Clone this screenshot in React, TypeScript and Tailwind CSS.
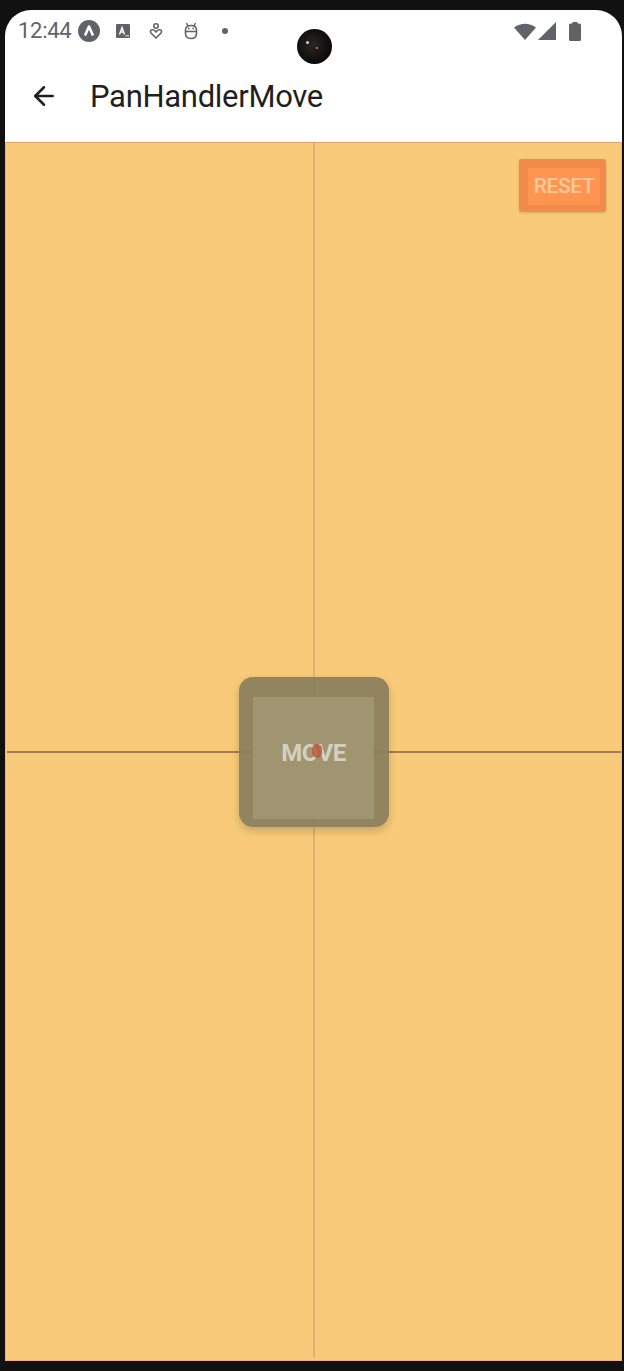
import React from 'react';
import { ArrowLeft } from 'lucide-react';

function StatusBar() {
  return (
    <div className="relative h-[50px] flex items-center px-[13px] pb-[8px] text-[#5f6368]">
      <span className="text-[22px] leading-none tracking-[-0.3px] font-['Roboto',sans-serif]">12:44</span>
      <div className="flex items-center ml-[7px]">
        <svg width="22" height="22" viewBox="0 0 22 22">
          <circle cx="11" cy="11" r="11" fill="#5f6368" />
          <path d="M7 15.5 L11 6.5 L15 15.5" stroke="#fff" strokeWidth="2.6" fill="none" strokeLinejoin="round" />
        </svg>
        <svg width="14" height="14" viewBox="0 0 14 14" className="ml-[16px]">
          <rect width="14" height="14" rx="1" fill="#5f6368" />
          <path d="M3.5 10.5 L6 3.5 L8.5 10.5 M4.4 8 H7.6" stroke="#fff" strokeWidth="1.4" fill="none" />
          <rect x="9.5" y="11" width="3.5" height="1.5" fill="#fff" opacity="0.6" />
        </svg>
        <svg width="14" height="16" viewBox="0 0 14 16" className="ml-[19px]">
          <circle cx="7" cy="3" r="2.2" stroke="#5f6368" strokeWidth="1.6" fill="none" />
          <path d="M7 15 L2 10 Q0.5 7.5 3 6.8 Q5.5 6.5 7 9 Q8.5 6.5 11 6.8 Q13.5 7.5 12 10 Z" stroke="#5f6368" strokeWidth="1.6" fill="none" strokeLinejoin="round" />
        </svg>
        <svg width="14" height="18" viewBox="0 0 14 18" className="ml-[21px]">
          <path d="M2.5 1 L4 4 M11.5 1 L10 4" stroke="#5f6368" strokeWidth="1.5" />
          <path d="M1.5 8 Q1.5 3.5 7 3.5 Q12.5 3.5 12.5 8 V11.5 Q12.5 16.5 7 16.5 Q1.5 16.5 1.5 11.5 Z" stroke="#5f6368" strokeWidth="1.6" fill="none" />
          <path d="M1.5 9.5 H12.5" stroke="#5f6368" strokeWidth="1.5" />
          <circle cx="4.8" cy="6.5" r="0.9" fill="#5f6368" />
          <circle cx="9.2" cy="6.5" r="0.9" fill="#5f6368" />
        </svg>
        <span className="ml-[24px] w-[6px] h-[6px] rounded-full bg-[#5f6368]" />
      </div>
      <div className="ml-auto flex items-center gap-[2px] mr-[28px]">
        <svg width="22" height="17" viewBox="0 0 22 17">
          <path d="M0 4.5 Q11 -3 22 4.5 L11 17 Z" fill="#5f6368" />
        </svg>
        <svg width="18" height="18" viewBox="0 0 18 18">
          <path d="M18 0 V18 H0 Z" fill="#5f6368" />
        </svg>
        <svg width="12" height="19" viewBox="0 0 12 19" className="ml-[11px]">
          <rect x="3.5" y="0" width="5" height="2" fill="#5f6368" />
          <rect x="0" y="1.5" width="12" height="17.5" rx="1.5" fill="#5f6368" />
        </svg>
      </div>
      <div className="absolute left-[292px] top-[19px] w-[35px] h-[35px] rounded-full bg-[radial-gradient(circle_at_45%_45%,#2a2622,#0b0a09_70%)]">
        <span className="absolute left-[9px] top-[12px] w-[3px] h-[3px] rounded-full bg-[#c8d0e0]" />
        <span className="absolute left-[19px] top-[18px] w-[2px] h-[2px] rounded-full bg-[#e08a30]" />
      </div>
    </div>
  );
}

function AppBar() {
  return (
    <div className="h-[83px] flex items-center pb-[10px] border-b border-[#e8a56b]">
      <ArrowLeft size={30} strokeWidth={2} className="ml-[24px] text-[#1f1f1f]" />
      <h1 className="ml-[31px] text-[31px] leading-none text-[#1f1f1f] font-['Roboto',sans-serif] tracking-[-0.3px]">
        PanHandlerMove
      </h1>
    </div>
  );
}

function Canvas() {
  return (
    <div className="relative flex-1 bg-[#f8ca79] border-x border-b border-[#f3b282] font-['Roboto',sans-serif]">
      <div className="absolute left-[307px] top-0 bottom-[2px] w-[2px] bg-[#dcb472]" />
      <div className="absolute left-[1px] right-0 top-[608px] h-[2px] bg-[#a27e57]" />

      <div className="absolute right-[15px] top-[16px] w-[87px] h-[53px] rounded-[3px] bg-[#f28a4a] shadow-[0_1px_3px_rgba(0,0,0,0.15)] pt-[9px] pl-[9px]">
        <div className="w-[72px] h-[37px] bg-[#ff954f] flex items-center justify-center">
          <span className="text-[21px] font-medium text-[#ffc9a0] tracking-[-0.4px]">RESET</span>
        </div>
      </div>

      <div className="absolute left-[233px] top-[534px] w-[150px] h-[150px] rounded-[14px] bg-[#8b7f5e]/95 shadow-[0_4px_8px_rgba(0,0,0,0.18)] pt-[20px] pl-[14px]">
        <div className="relative w-[121px] h-[122px] bg-[#a09471] flex items-center justify-center">
          <span className="relative mt-[-10px] text-[24px] font-bold text-[#ddd8cc]/90 tracking-[-0.5px]">MOVE</span>
          <span className="absolute left-[59px] top-[47px] w-[10px] h-[14px] rounded-full bg-[#b85a3c]/85" />
        </div>
      </div>
    </div>
  );
}

export default function App() {
  return (
    <div className="w-[624px] h-[1371px] bg-[#111111] pt-[10px] pl-[5px] pr-[2px] pb-[10px] flex flex-col">
      <div className="flex-1 flex flex-col bg-white rounded-t-[26px] overflow-hidden">
        <StatusBar />
        <AppBar />
        <Canvas />
      </div>
    </div>
  );
}
